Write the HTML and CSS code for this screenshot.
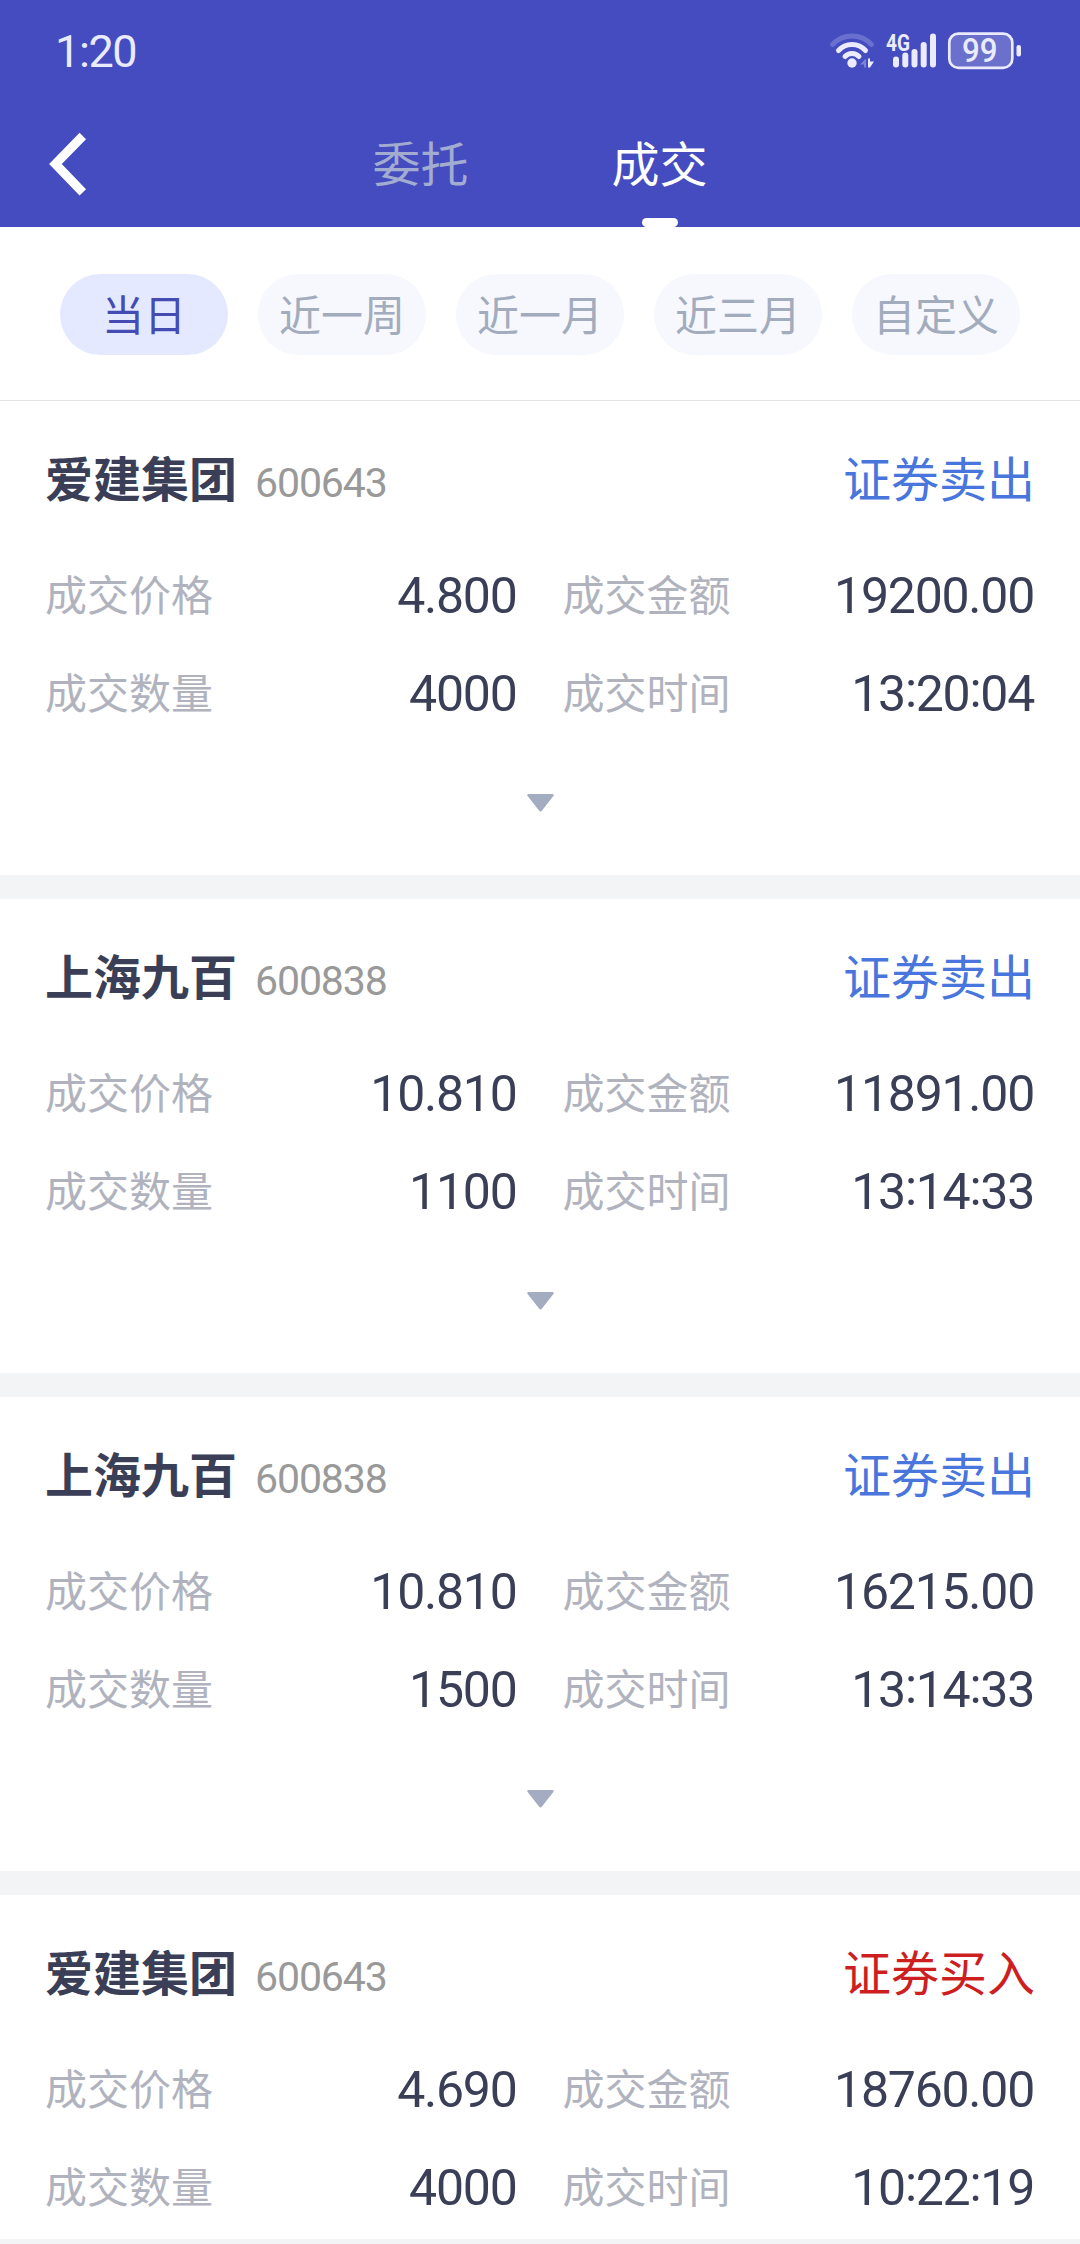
FILE: index.html
```html
<!DOCTYPE html>
<html lang="zh-CN">
<head>
<meta charset="utf-8">
<title>成交</title>
<link rel="stylesheet" href="styles.css">
</head>
<body>
<header class="header">
  <div class="status">
    <span class="clock">1:20</span>
    <svg class="status-icons" width="200" height="44" viewBox="828 29 200 44">
      <g fill="none" stroke="#ebebff" stroke-width="5" stroke-linecap="round">
        <path d="M832.5 44.500a26.500 26.500 0 0 1 39 0" stroke="#6a70d0"/>
        <path d="M838.500 50.500a18 18 0 0 1 27 0"/>
        <path d="M845 56.500a9.500 9.500 0 0 1 14 0"/>
      </g>
      <circle cx="852" cy="63" r="4.700" fill="#ebebff"/>
      <path d="M866 58.500v9h-2v-3h-4z" fill="#7d82da"/>
      <path d="M868 58.500h2v3h4l-4 6h-2z" fill="#ebebff"/>
      <text class="net" x="886" y="51.300" textLength="24" lengthAdjust="spacingAndGlyphs">4G</text>
      <g fill="#ebebff">
        <rect x="893" y="56.500" width="6" height="11" rx="3"/>
        <rect x="902.300" y="52.500" width="6" height="15" rx="3"/>
        <rect x="911.500" y="49" width="6" height="18.500" rx="3"/>
        <rect x="920.700" y="42" width="6" height="25.500" rx="3"/>
        <rect x="930" y="33.500" width="6" height="34" rx="3"/>
        <rect x="1016.500" y="45" width="4.500" height="11.500" rx="2.200"/>
      </g>
      <rect x="949.300" y="33.600" width="63" height="34.200" rx="9" fill="#6a70cb" stroke="#ebebff" stroke-width="2.700"/>
      <text class="level" x="962" y="62" textLength="35.500" lengthAdjust="spacingAndGlyphs">99</text>
    </svg>
  </div>
  <nav class="nav">
    <svg class="back" width="40" height="64" viewBox="48 132 40 64">
      <path d="M82.800 136L55.400 164l27.400 28.300" fill="none" stroke="#fff" stroke-width="9"/>
    </svg>
    <div class="tabs">
      <a class="tab">委托</a>
      <a class="tab tab-active">成交</a>
    </div>
  </nav>
</header>
<div class="filters">
  <span class="chip chip-active">当日</span>
  <span class="chip">近一周</span>
  <span class="chip">近一月</span>
  <span class="chip">近三月</span>
  <span class="chip">自定义</span>
</div>
<main class="list">
  <article class="card">
    <div class="head"><h2 class="name">爱建集团</h2><span class="code">600643</span><span class="side sell">证券卖出</span></div>
    <dl class="grid">
      <div class="cell"><dt>成交价格</dt><dd>4.800</dd></div>
      <div class="cell"><dt>成交金额</dt><dd>19200.00</dd></div>
      <div class="cell"><dt>成交数量</dt><dd>4000</dd></div>
      <div class="cell"><dt>成交时间</dt><dd>13<i>:</i>20<i>:</i>04</dd></div>
    </dl>
    <svg class="more" width="27" height="18" viewBox="0 0 27 18"><path d="M2 0h23q3 0 1 2.500L15 16.500q-1.500 2-3 0L1 2.500Q-1 0 2 0z"/></svg>
  </article>
  <article class="card">
    <div class="head"><h2 class="name">上海九百</h2><span class="code">600838</span><span class="side sell">证券卖出</span></div>
    <dl class="grid">
      <div class="cell"><dt>成交价格</dt><dd>10.810</dd></div>
      <div class="cell"><dt>成交金额</dt><dd>11891.00</dd></div>
      <div class="cell"><dt>成交数量</dt><dd>1100</dd></div>
      <div class="cell"><dt>成交时间</dt><dd>13<i>:</i>14<i>:</i>33</dd></div>
    </dl>
    <svg class="more" width="27" height="18" viewBox="0 0 27 18"><path d="M2 0h23q3 0 1 2.500L15 16.500q-1.500 2-3 0L1 2.500Q-1 0 2 0z"/></svg>
  </article>
  <article class="card">
    <div class="head"><h2 class="name">上海九百</h2><span class="code">600838</span><span class="side sell">证券卖出</span></div>
    <dl class="grid">
      <div class="cell"><dt>成交价格</dt><dd>10.810</dd></div>
      <div class="cell"><dt>成交金额</dt><dd>16215.00</dd></div>
      <div class="cell"><dt>成交数量</dt><dd>1500</dd></div>
      <div class="cell"><dt>成交时间</dt><dd>13<i>:</i>14<i>:</i>33</dd></div>
    </dl>
    <svg class="more" width="27" height="18" viewBox="0 0 27 18"><path d="M2 0h23q3 0 1 2.500L15 16.500q-1.500 2-3 0L1 2.500Q-1 0 2 0z"/></svg>
  </article>
  <article class="card">
    <div class="head"><h2 class="name">爱建集团</h2><span class="code">600643</span><span class="side buy">证券买入</span></div>
    <dl class="grid">
      <div class="cell"><dt>成交价格</dt><dd>4.690</dd></div>
      <div class="cell"><dt>成交金额</dt><dd>18760.00</dd></div>
      <div class="cell"><dt>成交数量</dt><dd>4000</dd></div>
      <div class="cell"><dt>成交时间</dt><dd>10<i>:</i>22<i>:</i>19</dd></div>
    </dl>
  </article>
</main>
<footer class="bottom"></footer>
</body>
</html>
```

FILE: styles.css
```css
* { box-sizing: border-box; }

body {
  margin: 0;
  height: 2244px;
  overflow: hidden;
  display: flex;
  flex-direction: column;
  background: #fff;
  color: #3a3f57;
  font-family: Roboto, "Noto Sans CJK SC", sans-serif;
}

.header {
  flex: none;
  height: 227px;
  background: #444cbf;
}

.status {
  display: flex;
  justify-content: space-between;
  align-items: center;
  height: 102px;
  padding: 0 52px 0 55px;
}

.clock {
  padding-top: 2px;
  font-size: 45px;
  line-height: 54px;
  letter-spacing: -1.4px;
  color: #ebebff;
}

.net {
  font: 700 24px Roboto, sans-serif;
  fill: #ebebff;
}

.level {
  font: 500 33px Roboto, sans-serif;
  fill: #ebebff;
}

.nav {
  display: grid;
  grid-template-columns: 301px 478px 1fr;
  height: 125px;
}

.back { margin: 30px 0 0 48px; }

.tabs { display: grid; grid-template-columns: 1fr 1fr; }

.tab {
  display: flex;
  flex-direction: column;
  align-items: center;
  justify-content: space-between;
  padding-top: 24px;
  font-family: "Noto Sans CJK SC", sans-serif;
  font-size: 48px;
  line-height: 70px;
  color: #a2abd0;
}

.tab-active { color: #fff; }

.tab-active::after {
  content: "";
  width: 36px;
  height: 9px;
  border-radius: 4.5px;
  background: #fff;
}

.filters {
  flex: none;
  display: grid;
  grid-template-columns: repeat(5, 168px);
  gap: 30px;
  height: 174px;
  padding: 47px 60px 0;
  border-bottom: 1px solid #e2e4e6;
}

.chip {
  height: 81px;
  border-radius: 41px;
  background: #f6f8fd;
  color: #a3acbd;
  font-family: "Noto Sans CJK SC", sans-serif;
  font-size: 42px;
  line-height: 78px;
  text-align: center;
}

.chip-active { background: #e5e9ff; color: #444cb4; }

.list {
  flex: none;
  display: flex;
  flex-direction: column;
  gap: 24px;
  height: 1838px;
  overflow: hidden;
  background: #f3f4f6;
}

.card {
  flex: none;
  display: flex;
  flex-direction: column;
  align-items: center;
  height: 474px;
  padding: 40px 45px 0;
  background: #fff;
}

.head {
  display: flex;
  align-items: baseline;
  width: 100%;
  font-family: "Noto Sans CJK SC", sans-serif;
  font-size: 48px;
  line-height: 70px;
}

.name {
  margin: 0 18px 0 0;
  font-size: 48px;
  font-weight: 700;
}

.code {
  font-family: Roboto, sans-serif;
  font-size: 41px;
  letter-spacing: -1.1px;
  color: #999;
}

.side { margin-left: auto; }
.sell { color: #4876dc; }
.buy { color: #cd1f1f; }

.grid {
  display: grid;
  grid-template-columns: 1fr 1fr;
  column-gap: 45px;
  width: 100%;
  margin: 29px 0 0;
}

.cell {
  display: flex;
  justify-content: space-between;
  height: 98px;
}

.cell dt {
  font-family: "Noto Sans CJK SC", sans-serif;
  font-size: 42px;
  line-height: 92px;
  color: #b0b3be;
}

.cell dd {
  margin: 0;
  padding-right: 1px;
  font-size: 50px;
  line-height: 98px;
  letter-spacing: -1.25px;
}

.cell i {
  font-style: normal;
  line-height: 0;
  vertical-align: 4px;
}

.more { margin-top: 51px; fill: #a3acc0; }

.bottom { flex: 1; background: #f3f4f6; }
```
